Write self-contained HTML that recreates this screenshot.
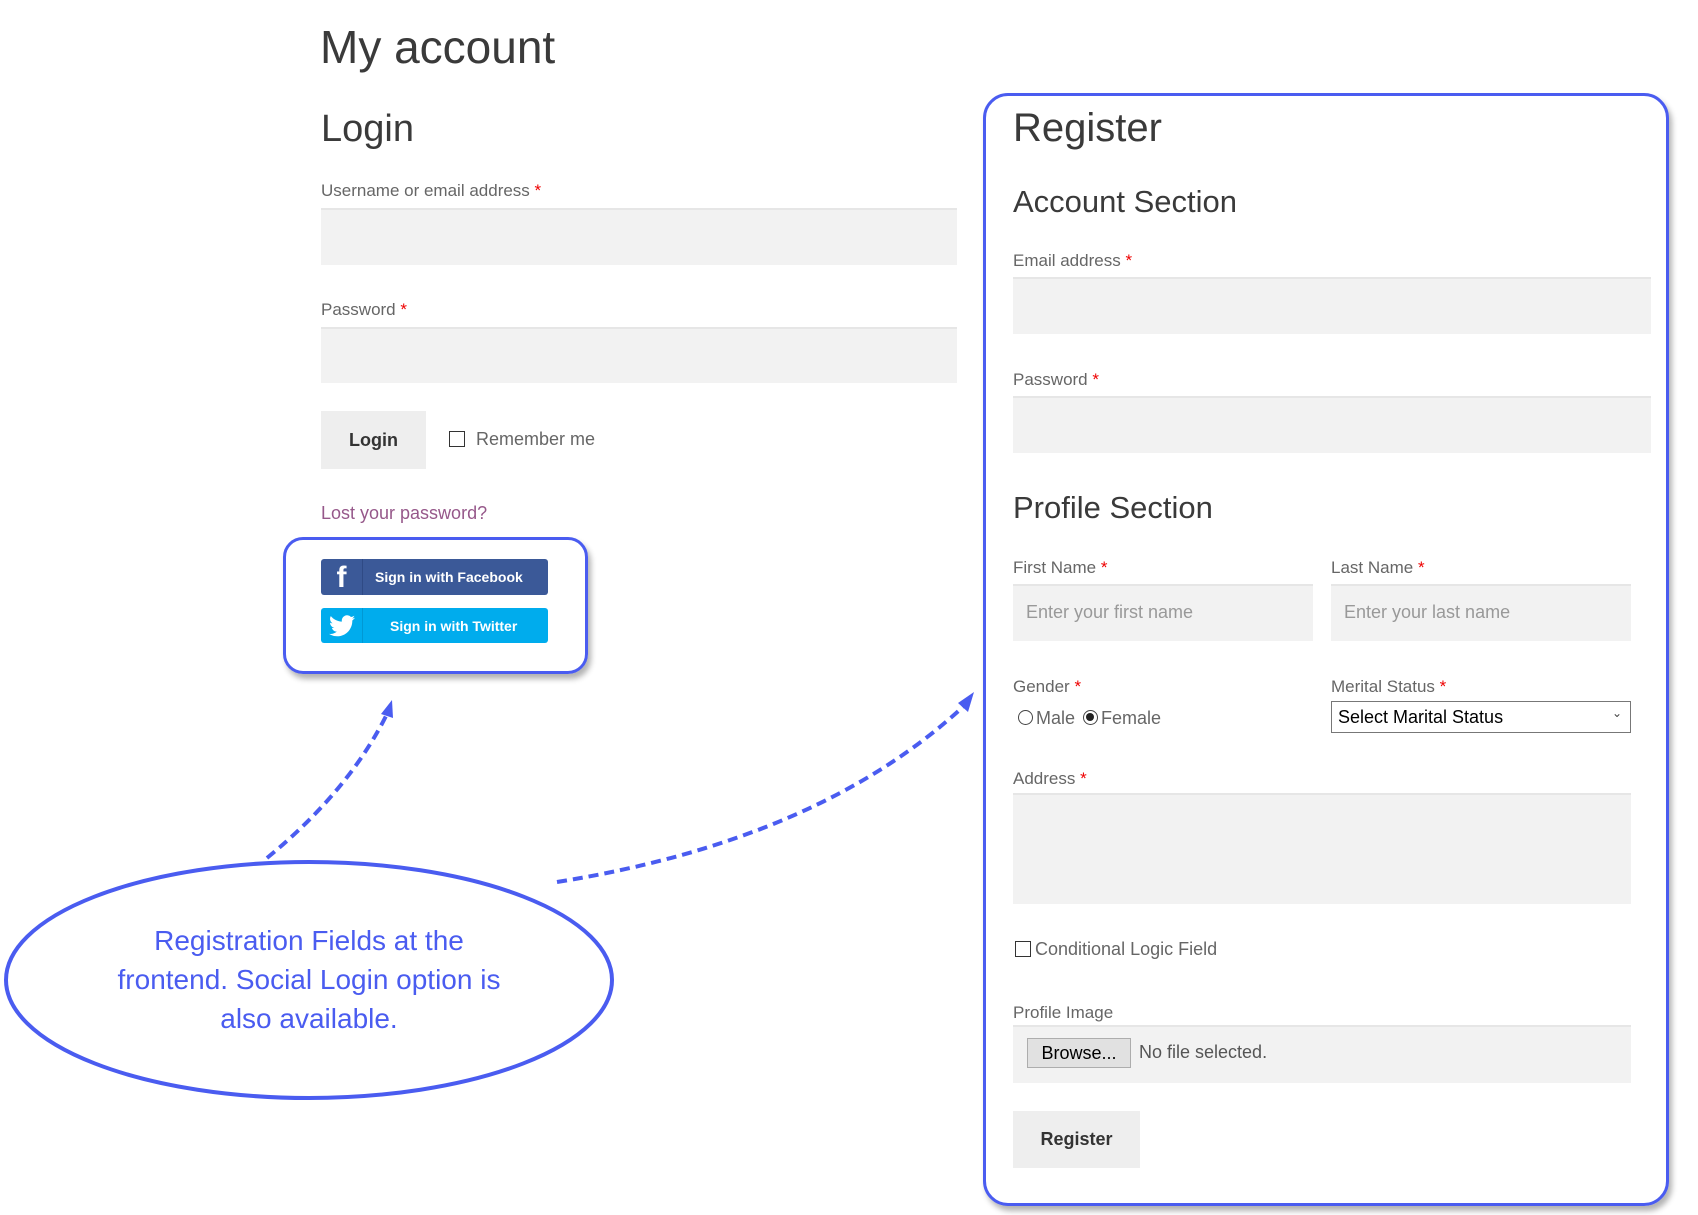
<!DOCTYPE html>
<html><head><meta charset="utf-8"><style>
*{margin:0;padding:0;box-sizing:border-box}
body{width:1698px;height:1215px;background:#fff;position:relative;overflow:hidden;font-family:"Liberation Sans",sans-serif;color:#666}
.a{position:absolute;white-space:nowrap}
.h{color:#3a3a3a;font-weight:normal}
.lab{font-size:17px;color:#666}
.lab b{color:#e00;font-weight:normal}
.in{position:absolute;background:#f2f2f2;border-top:2px solid #e6e6e6}
.btn{position:absolute;background:#eee;color:#333;font-weight:bold;font-size:18px;display:flex;align-items:center;justify-content:center}
.ph{font-size:18px;color:#999;position:absolute;left:13px;top:16px}
</style></head><body>
<div class="a h" style="left:320px;top:20px;font-size:46px">My account</div>
<div class="a h" style="left:321px;top:108px;font-size:38px">Login</div>
<div class="a lab" style="left:321px;top:181px">Username or email address <b>*</b></div>
<div class="in" style="left:321px;top:208px;width:636px;height:57px"></div>
<div class="a lab" style="left:321px;top:300px">Password <b>*</b></div>
<div class="in" style="left:321px;top:327px;width:636px;height:56px"></div>
<div class="btn" style="left:321px;top:411px;width:105px;height:58px">Login</div>
<div class="a" style="left:449px;top:431px;width:16px;height:16px;border:1.5px solid #333"></div>
<div class="a" style="left:476px;top:429px;font-size:18px;color:#666">Remember me</div>
<div class="a" style="left:321px;top:503px;font-size:18px;color:#96588a">Lost your password?</div>

<div class="a" style="left:283px;top:537px;width:305px;height:137px;border:3px solid #4a5cf0;border-radius:20px;box-shadow:3px 5px 6px rgba(0,0,0,.3)"></div>
<div class="a" style="left:321px;top:559px;width:227px;height:36px;background:#3b5998;border-radius:3px;color:#fff;font-size:14px;font-weight:bold">
 <div class="a" style="left:0;top:0;width:42px;height:36px;border-right:1px solid #2f4a85;font-size:30px;text-align:center;line-height:38px;font-family:'Liberation Sans'">f</div>
 <div class="a" style="left:54px;top:10px">Sign in with Facebook</div></div>
<div class="a" style="left:321px;top:608px;width:227px;height:35px;background:#00aced;border-radius:3px;color:#fff;font-size:14px;font-weight:bold">
 <div class="a" style="left:0;top:0;width:42px;height:35px;border-right:1px solid #0098d4"></div>
 <svg class="a" style="left:8px;top:7px" width="26" height="22" viewBox="0 0 24 20"><path fill="#fff" d="M24 2.4c-.9.4-1.8.6-2.8.8 1-.6 1.8-1.6 2.2-2.7-1 .6-2 1-3.1 1.2A4.9 4.9 0 0 0 11.9 6C7.8 5.8 4.2 3.9 1.7.9.3 3.2 1 6 3.2 7.5c-.8 0-1.6-.2-2.2-.6 0 2.4 1.7 4.4 3.9 4.8-.7.2-1.5.2-2.2.1.6 2 2.4 3.4 4.6 3.4A9.9 9.9 0 0 1 0 17.3 14 14 0 0 0 7.5 19.5c9.1 0 14-7.5 14-14v-.6c1-.7 1.8-1.6 2.5-2.5z"/></svg>
 <div class="a" style="left:69px;top:10px">Sign in with Twitter</div></div>

<div class="a" style="left:983px;top:93px;width:694px;height:1113px;border:3px solid #4a5cf0;border-radius:25px;box-shadow:3px 5px 6px rgba(0,0,0,.3);width:686px"></div>
<div class="a h" style="left:1013px;top:106px;font-size:40px">Register</div>
<div class="a h" style="left:1013px;top:184px;font-size:31px">Account Section</div>
<div class="a lab" style="left:1013px;top:251px">Email address <b>*</b></div>
<div class="in" style="left:1013px;top:277px;width:638px;height:57px"></div>
<div class="a lab" style="left:1013px;top:370px">Password <b>*</b></div>
<div class="in" style="left:1013px;top:396px;width:638px;height:57px"></div>
<div class="a h" style="left:1013px;top:490px;font-size:31px">Profile Section</div>
<div class="a lab" style="left:1013px;top:558px">First Name <b>*</b></div>
<div class="a lab" style="left:1331px;top:558px">Last Name <b>*</b></div>
<div class="in" style="left:1013px;top:584px;width:300px;height:57px"><span class="ph">Enter your first name</span></div>
<div class="in" style="left:1331px;top:584px;width:300px;height:57px"><span class="ph">Enter your last name</span></div>
<div class="a lab" style="left:1013px;top:677px">Gender <b>*</b></div>
<div class="a lab" style="left:1331px;top:677px">Merital Status <b>*</b></div>
<div class="a" style="left:1018px;top:710px;width:15px;height:15px;border:1.5px solid #444;border-radius:50%"></div>
<div class="a" style="left:1036px;top:708px;font-size:18px">Male</div>
<div class="a" style="left:1083px;top:710px;width:15px;height:15px;border:1.5px solid #444;border-radius:50%"><div style="margin:2px;width:8px;height:8px;border-radius:50%;background:#222"></div></div>
<div class="a" style="left:1101px;top:708px;font-size:18px">Female</div>
<div class="a" style="left:1331px;top:701px;width:300px;height:32px;border:1px solid #777;color:#000;font-size:18px;padding:5px 6px">Select Marital Status<span style="position:absolute;right:8px;top:4px;font-size:12px;color:#444">&#8964;</span></div>
<div class="a lab" style="left:1013px;top:769px">Address <b>*</b></div>
<div class="in" style="left:1013px;top:793px;width:618px;height:111px"></div>
<div class="a" style="left:1015px;top:941px;width:16px;height:16px;border:1.5px solid #333"></div>
<div class="a" style="left:1035px;top:939px;font-size:18px">Conditional Logic Field</div>
<div class="a lab" style="left:1013px;top:1003px">Profile Image</div>
<div class="in" style="left:1013px;top:1025px;width:618px;height:58px"></div>
<div class="a" style="left:1027px;top:1038px;width:104px;height:30px;background:#e1e1e1;border:1px solid #adadad;color:#000;font-size:18px;text-align:center;line-height:28px">Browse...</div>
<div class="a" style="left:1139px;top:1042px;font-size:18px;color:#555">No file selected.</div>
<div class="btn" style="left:1013px;top:1111px;width:127px;height:57px">Register</div>

<svg class="a" style="left:0;top:0" width="1698" height="1215">
<ellipse cx="309" cy="980" rx="303" ry="118" fill="none" stroke="#4a5cf0" stroke-width="4"/>
<path d="M267 858 Q350 790 388 712" fill="none" stroke="#4a5cf0" stroke-width="4" stroke-dasharray="10 6"/>
<path d="M381 714 L392 700 L393 718Z" fill="#4a5cf0"/>
<path d="M557 882 Q820 840 965 705" fill="none" stroke="#4a5cf0" stroke-width="4" stroke-dasharray="10 6"/>
<path d="M958 703 L974 692 L968 712Z" fill="#4a5cf0"/>
</svg>
<div class="a" style="left:9px;top:921px;width:600px;text-align:center;white-space:normal;font-size:28px;line-height:39px;color:#4a5cf0">Registration Fields at the<br>frontend. Social Login option is<br>also available.</div>
</body></html>
